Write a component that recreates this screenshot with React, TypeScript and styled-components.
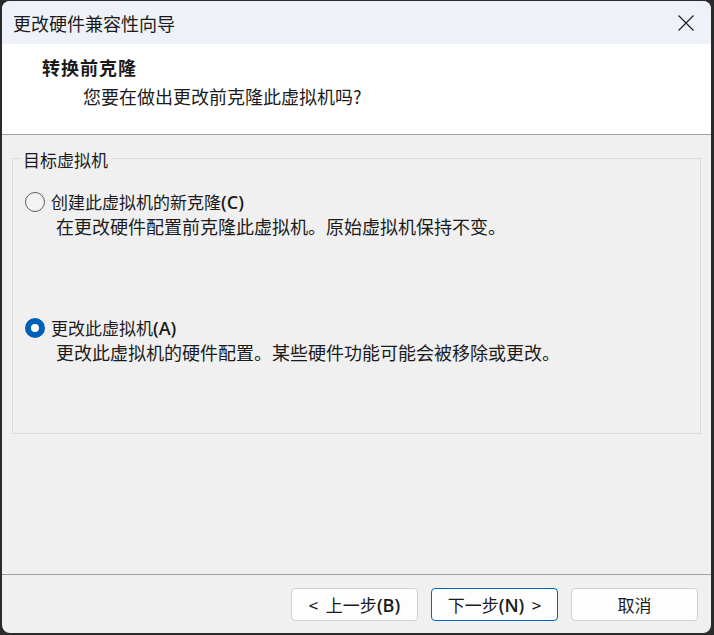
import React, { useState } from 'react'
import styled, { createGlobalStyle } from 'styled-components'

const GlobalStyle = createGlobalStyle`
html, body {
  margin: 0;
  padding: 0;
  background: #2b2b2b;
}
body {
  font-family: "Noto Sans CJK SC", "Noto Sans", sans-serif;
  color: #1b1b1b;
}
`

type Option = {
  key: string
  label: string
  hotkey: string
  desc: string
}

const options: Option[] = [
  {
    key: 'clone',
    label: '创建此虚拟机的新克隆',
    hotkey: '(C)',
    desc: '在更改硬件配置前克隆此虚拟机。原始虚拟机保持不变。',
  },
  {
    key: 'alter',
    label: '更改此虚拟机',
    hotkey: '(A)',
    desc: '更改此虚拟机的硬件配置。某些硬件功能可能会被移除或更改。',
  },
]

export default function App() {
  const [choice, setChoice] = useState('alter')
  return (
    <>
      <GlobalStyle />
      <Window>
        <TitleBar>
          <TitleText>更改硬件兼容性向导</TitleText>
          <CloseButton aria-label="关闭">
            <svg width="16" height="16" viewBox="0 0 16 16">
              <path d="M0.5 0.5 L15.5 15.5 M15.5 0.5 L0.5 15.5" stroke="#1b1b1b" strokeWidth="1.1" fill="none" />
            </svg>
          </CloseButton>
        </TitleBar>
        <Header>
          <HeaderTitle>转换前克隆</HeaderTitle>
          <HeaderDesc>您要在做出更改前克隆此虚拟机吗?</HeaderDesc>
        </Header>
        <Body>
          <Group>
            <Legend>目标虚拟机</Legend>
            {options.map((o, i) => (
              <OptionBlock key={o.key} first={i === 0}>
                <RadioRow onClick={() => setChoice(o.key)}>
                  <RadioCircle checked={choice === o.key} />
                  <RadioLabel>
                    {o.label}
                    <Hotkey>{o.hotkey}</Hotkey>
                  </RadioLabel>
                </RadioRow>
                <OptionDesc>{o.desc}</OptionDesc>
              </OptionBlock>
            ))}
          </Group>
        </Body>
        <Footer>
          <Button>&lt;  上一步<Hotkey>(B)</Hotkey></Button>
          <Button primary>下一步<Hotkey>(N)</Hotkey>  &gt;</Button>
          <Button>取消</Button>
        </Footer>
      </Window>
    </>
  )
}

const Window = styled.div`
display: flex;
flex-direction: column;
width: 709px;
height: 632px;
margin: 1px 3px 2px 2px;
border-radius: 8px;
overflow: hidden;
background: #f0f0f0;
`

const TitleBar = styled.div`
display: flex;
align-items: center;
justify-content: space-between;
height: 43px;
padding: 0 17px 0 11px;
background: #eef2f8;
`

const TitleText = styled.span`
font-size: 18px;
line-height: 24px;
`

const CloseButton = styled.div`
display: flex;
align-items: center;
width: 16px;
height: 16px;
`

const Header = styled.div`
height: 79px;
padding-top: 11px;
background: #ffffff;
border-bottom: 1px solid #a0a0a0;
`

const HeaderTitle = styled.div`
padding-left: 40px;
font-size: 18px;
font-weight: 700;
line-height: 24px;
letter-spacing: 1px;
`

const HeaderDesc = styled.div`
margin-top: 5px;
padding-left: 81px;
font-size: 18px;
line-height: 24px;
`

const Body = styled.div`
flex: 1;
padding: 11px 10px 0 10px;
`

const Group = styled.fieldset`
margin: 0;
padding: 0 0 69px 0;
border: 1px solid #dcdcdc;
`

const Legend = styled.legend`
margin-left: 8px;
padding: 4px 3px 0 2px;
font-size: 17px;
line-height: 20px;
`

const OptionBlock = styled.div<{ first: boolean }>`
margin-top: ${(p) => (p.first ? '20px' : '78px')};
padding-left: 12px;
`

const RadioRow = styled.div`
display: flex;
align-items: center;
gap: 6px;
height: 24px;
cursor: pointer;
`

const RadioCircle = styled.span<{ checked: boolean }>`
box-sizing: border-box;
display: flex;
align-items: center;
justify-content: center;
width: 20px;
height: 20px;
border-radius: 50%;
border: ${(p) => (p.checked ? '6px solid #005fb8' : '1px solid #5f5f5f')};
background: ${(p) => (p.checked ? '#ffffff' : '#f3f3f3')};
`

const RadioLabel = styled.span`
font-size: 17px;
line-height: 24px;
`

const Hotkey = styled.span`
font-family: "Open Sans", "Noto Sans", sans-serif;
font-weight: 600;
font-size: 1.06em;
`

const OptionDesc = styled.div`
padding-left: 31px;
font-size: 18px;
line-height: 24px;
`

const Footer = styled.div`
display: flex;
justify-content: flex-end;
gap: 13px;
height: 45px;
padding: 13px 13px 0 0;
border-top: 1px solid #a0a0a0;
`

const Button = styled.div<{ primary?: boolean }>`
box-sizing: border-box;
display: flex;
align-items: center;
justify-content: center;
width: 127px;
height: 33px;
border-radius: 4px;
border: 1px solid ${(p) => (p.primary ? '#0067c0' : '#d0d0d0')};
background: #fdfdfd;
font-size: 17px;
white-space: pre;
`
